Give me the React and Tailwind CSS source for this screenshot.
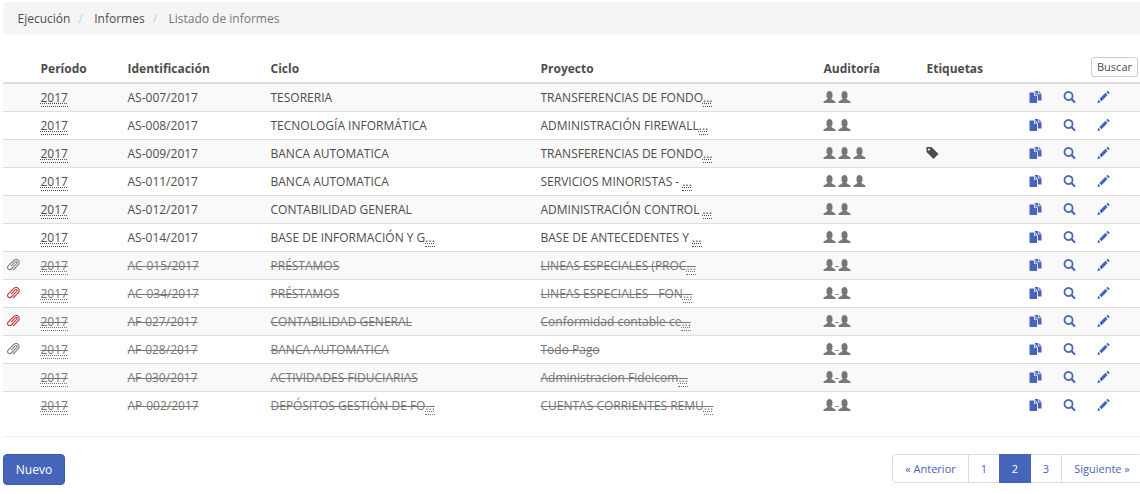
import React from 'react';

const PATHS = {
  user:
    'M600 1200q124 0 212 -88t88 -212v-250q0 -46 -31 -98t-69 -52v-75q0 -10 6 -21.5t15 -17.5l358 -230q9 -5 15 -16.5t6 -21.5v-93q0 -10 -7.5 -17.5t-17.5 -7.5h-1150q-10 0 -17.5 7.5t-7.5 17.5v93q0 10 6 21.5t15 16.5l358 230q9 6 15 17.5t6 21.5v75q-38 0 -69 52t-31 98v250q0 124 88 212t212 88z',
  search:
    'M500 1191q100 0 191 -39t156.5 -104.5t104.5 -156.5t39 -191l-1 -2l1 -5q0 -141 -78 -262l275 -274q23 -26 22.5 -44.5t-22.5 -42.5l-59 -58q-26 -20 -46.5 -20t-39.5 20l-275 274q-119 -77 -261 -77l-5 1l-2 -1q-100 0 -191 39t-156.5 104.5t-104.5 156.5t-39 191t39 191t104.5 156.5t156.5 104.5t191 39zM500 1022q-88 0 -162 -43t-117 -117t-43 -162t43 -162t117 -117t162 -43t162 43t117 117t43 162t-43 162t-117 117t-162 43z',
  pencil:
    'M1011 1210q19 0 33 -13l153 -153q13 -14 13 -33t-13 -33l-99 -92l-214 214l95 96q13 14 32 14zM1013 800l-615 -614l-214 214l614 614zM317 96l-333 -112l110 335z',
  tag:
    'M1 700v475q0 10 7.5 17.5t17.5 7.5h474l700 -700l-500 -500zM148 953q0 -42 29 -71q30 -30 71.5 -30t71.5 30q29 29 29 71t-29 71q-30 30 -71.5 30t-71.5 -30q-29 -29 -29 -71z',
  clip:
    'M518 119l69 -60l517 511q67 67 95 157t11 183q-16 87 -67 154t-130 103q-69 33 -152 33q-107 0 -197 -55q-40 -24 -111 -95l-512 -512q-68 -68 -81 -163t35 -173q35 -57 94 -89t129 -32q63 0 119 28q33 16 65 40.5t52.5 45.5t59.5 64q40 44 57 61l394 394q35 35 47 84t-3 96q-27 87 -117 104q-20 2 -29 2q-46 0 -78.5 -16.5t-67.5 -51.5l-389 -396l-7 -7l69 -67l377 373q20 22 39 38q23 23 50 23q38 0 53 -36q16 -39 -20 -75l-547 -547q-52 -52 -125 -52q-55 0 -100 33t-54 96q-5 35 2.5 66t31.5 63t42 50t56 54q24 21 44 41l348 348q52 52 82.5 79.5t84 54t107.5 26.5q25 0 48 -4q95 -17 154 -94.5t51 -175.5q-7 -101 -98 -192l-252 -249l-253 -256z',
  copy:
    'M0 1000V50q0 -50 50 -50h650q50 0 50 50v640h-280v360h-420q-50 0 -50 -50zM550 1020v-260h190zM570 1200h280v-320h350v-580q0 -50 -50 -50h-320v470l-190 340h-120v90q0 50 50 50zM930 1200v-240h270z',
};

function Icon({ name, className = '' }) {
  return (
    <svg viewBox="0 0 1200 1200" className={`inline-block size-3 overflow-visible align-[-1px] ${className}`} fill="currentColor">
      <path d={PATHS[name]} transform="matrix(1 0 0 -1 -50 1200)" />
    </svg>
  );
}

const ROWS = [
  { id: 'AS-007/2017', ciclo: 'TESORERIA', proy: 'TRANSFERENCIAS DE FONDO', more: true, users: 2 },
  { id: 'AS-008/2017', ciclo: 'TECNOLOGÍA INFORMÁTICA', proy: 'ADMINISTRACIÓN FIREWALL', more: true, users: 2 },
  { id: 'AS-009/2017', ciclo: 'BANCA AUTOMATICA', proy: 'TRANSFERENCIAS DE FONDO', more: true, users: 3, tag: true },
  { id: 'AS-011/2017', ciclo: 'BANCA AUTOMATICA', proy: 'SERVICIOS MINORISTAS - ', more: true, users: 3 },
  { id: 'AS-012/2017', ciclo: 'CONTABILIDAD GENERAL', proy: 'ADMINISTRACIÓN CONTROL ', more: true, users: 2 },
  { id: 'AS-014/2017', ciclo: 'BASE DE INFORMACIÓN Y G', cicloMore: true, proy: 'BASE DE ANTECEDENTES Y ', more: true, users: 2 },
  { id: 'AC-015/2017', ciclo: 'PRÉSTAMOS', proy: 'LINEAS ESPECIALES (PROC', more: true, users: 2, done: true, clip: 'text-[#777]' },
  { id: 'AC-034/2017', ciclo: 'PRÉSTAMOS', proy: 'LINEAS ESPECIALES - FON', more: true, users: 2, done: true, clip: 'text-[#b92c28]' },
  { id: 'AF-027/2017', ciclo: 'CONTABILIDAD GENERAL', proy: 'Conformidad contable ce', more: true, users: 2, done: true, clip: 'text-[#b92c28]' },
  { id: 'AF-028/2017', ciclo: 'BANCA AUTOMATICA', proy: 'Todo Pago', users: 2, done: true, clip: 'text-[#777]' },
  { id: 'AF-030/2017', ciclo: 'ACTIVIDADES FIDUCIARIAS', proy: 'Administracion Fideicom', more: true, users: 2, done: true },
  { id: 'AP-002/2017', ciclo: 'DEPÓSITOS GESTIÓN DE FO', cicloMore: true, proy: 'CUENTAS CORRIENTES REMU', more: true, users: 2, done: true },
];

function Abbr({ children }) {
  return <span className="border-b border-dotted border-current underline decoration-dotted">{children}</span>;
}

// The larger outer font size lowers the strike line onto the hyphens.
function Text({ done, children }) {
  if (!done) return children;
  return (
    <span className="text-[13px] leading-[0px] line-through decoration-1">
      <span className="text-[12px] leading-[17px]">{children}</span>
    </span>
  );
}

function Row({ row, first }) {
  const cell = `${first ? 'h-[27px]' : 'h-7 border-t border-[#ddd]'} px-[4.5px] py-0 align-middle whitespace-pre`;
  return (
    <tr className={`odd:bg-[#f9f9f9] ${row.done ? 'text-[#777]' : ''}`}>
      <td className={cell}>{row.clip && <Icon name="clip" className={row.clip} />}</td>
      <td className={cell}><Text done={row.done}><Abbr>2017</Abbr></Text></td>
      <td className={cell}><Text done={row.done}>{row.id}</Text></td>
      <td className={cell}><Text done={row.done}>{row.ciclo}{row.cicloMore && <Abbr>...</Abbr>}</Text></td>
      <td className={cell}><Text done={row.done}>{row.proy}{row.more && <Abbr>...</Abbr>}</Text></td>
      <td className={`${cell} text-[#777]`}>
        <Text done={row.done}>
          {Array.from({ length: row.users }, (_, i) => (
            <React.Fragment key={i}>{i > 0 && ' '}<Icon name="user" /></React.Fragment>
          ))}
        </Text>
      </td>
      <td className={cell}>{row.tag && <Icon name="tag" />}</td>
      {['copy', 'search', 'pencil'].map((name) => (
        <td key={name} className={`${cell} text-[#4564ba]`}><Icon name={name} /></td>
      ))}
    </tr>
  );
}

const HEADS = ['', 'Período', 'Identificación', 'Ciclo', 'Proyecto', 'Auditoría', 'Etiquetas'];

export default function App() {
  const th = 'h-8 border-b-2 border-[#ddd] px-[4.5px] pt-[3px] pb-0 text-left align-middle font-bold';
  return (
    <div className="h-[494px] w-full overflow-hidden bg-white pt-[2px] pl-[3px] font-['Open_Sans',sans-serif] text-[12px] leading-[17px] text-[#4d4d4d]">
      <div className="w-[1140px]">
        <nav className="mb-[17px] flex h-[33px] items-center rounded-[4px] bg-[#f5f5f5] pl-[14.5px]">
          <span>Ejecución</span>
          <span className="w-[23.8px] pl-[8px] text-[#ccc]">/</span>
          <span>Informes</span>
          <span className="w-[23.8px] pl-[8px] text-[#ccc]">/</span>
          <span className="text-[#777]">Listado de informes</span>
        </nav>
        <table className="w-full table-fixed border-separate border-spacing-0">
          <colgroup>
            <col className="w-[33px]" />
            <col className="w-[87px]" />
            <col className="w-[143px]" />
            <col className="w-[270px]" />
            <col className="w-[283px]" />
            <col className="w-[103px]" />
            <col className="w-[103px]" />
            <col className="w-[34px]" />
            <col className="w-[34px]" />
            <col className="w-[50px]" />
          </colgroup>
          <thead>
            <tr>
              {HEADS.map((h) => <th key={h} className={th}>{h}</th>)}
              <th colSpan={3} className="h-8 border-b-2 border-[#ddd] p-0 pr-[5px]">
                <div className="flex justify-end">
                  <button className="h-5 w-[47px] rounded-[3px] border border-[#ccc] bg-white text-[11px] leading-[16px] font-normal">Buscar</button>
                </div>
              </th>
            </tr>
          </thead>
          <tbody>
            {ROWS.map((row, i) => <Row key={row.id} row={row} first={i === 0} />)}
          </tbody>
        </table>
        <hr className="mt-[17px] border-[#eee]" />
        <div className="mt-[17px] flex items-start justify-between">
          <button className="h-[31px] w-[62px] rounded-[4px] border border-[#3d5aa9] bg-[#4564ba] text-[12px] text-white">Nuevo</button>
          <ul className="flex h-[29px] items-stretch rounded-[4px] border border-[#ddd] text-[11px] text-[#4564ba]">
            <li className="flex w-[75px] items-center justify-center">« Anterior</li>
            <li className="flex w-[31px] items-center justify-center border-l border-[#ddd]">1</li>
            <li className="-my-px flex w-8 items-center justify-center bg-[#4564ba] text-white">2</li>
            <li className="flex w-[30px] items-center justify-center">3</li>
            <li className="flex w-[81px] items-center justify-center border-l border-[#ddd]">Siguiente »</li>
          </ul>
        </div>
      </div>
    </div>
  );
}
